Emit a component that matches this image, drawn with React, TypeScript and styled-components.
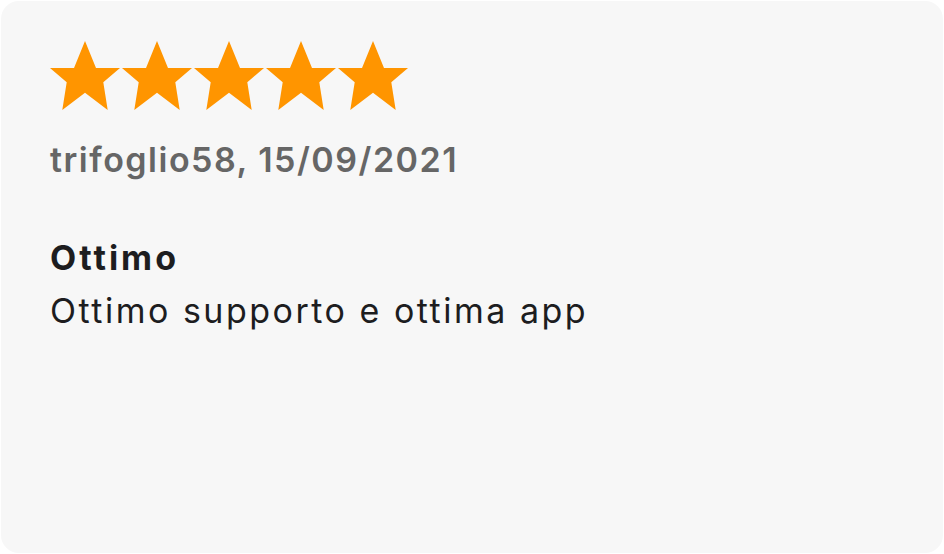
import styled, { createGlobalStyle } from 'styled-components';

const GlobalStyle = createGlobalStyle`
	html, body {
		margin: 0;
		padding: 0;
		background: #ffffff;
	}
	body {
		font-family: Inter, "Noto Sans", "Liberation Sans", sans-serif;
	}
`;

const Card = styled.div`
	margin: 1px;
	width: 942px;
	height: 552px;
	box-sizing: border-box;
	background: #f7f7f7;
	border-radius: 18px;
	padding: 40px 0 0 49px;
	display: flex;
	flex-direction: column;
`;

const Stars = styled.div`
	display: flex;
	gap: 2px;
	height: 70px;
`;

const Author = styled.div`
	margin-top: 29px;
	font-size: 34px;
	font-weight: 600;
	letter-spacing: 1.5px;
	color: #666666;
	line-height: 40px;
`;

const Title = styled.div`
	margin-top: 52px;
	font-size: 34px;
	font-weight: 700;
	letter-spacing: 3px;
	color: #1d1d1f;
	line-height: 52px;
`;

const Body = styled.div`
	margin-top: 1px;
	font-size: 34px;
	font-weight: 400;
	letter-spacing: 2.5px;
	color: #1d1d1f;
	line-height: 52px;
`;

const Star = () => (
	<svg width="70" height="70" viewBox="0 0 70 70">
		<polygon
			points="35,0 46,27 70,27 53.3,41.3 57.7,69 35,51.7 12.3,69 16.7,41.3 0,27 24,27"
			fill="#ff9500"
		/>
	</svg>
);

const App = () => {
	return (
		<>
			<GlobalStyle />
			<Card>
				<Stars>
					{[0, 1, 2, 3, 4].map((i) => (
						<Star key={i} />
					))}
				</Stars>
				<Author>trifoglio58, 15/09/2021</Author>
				<Title>Ottimo</Title>
				<Body>Ottimo supporto e ottima app</Body>
			</Card>
		</>
	);
};

export default App;
